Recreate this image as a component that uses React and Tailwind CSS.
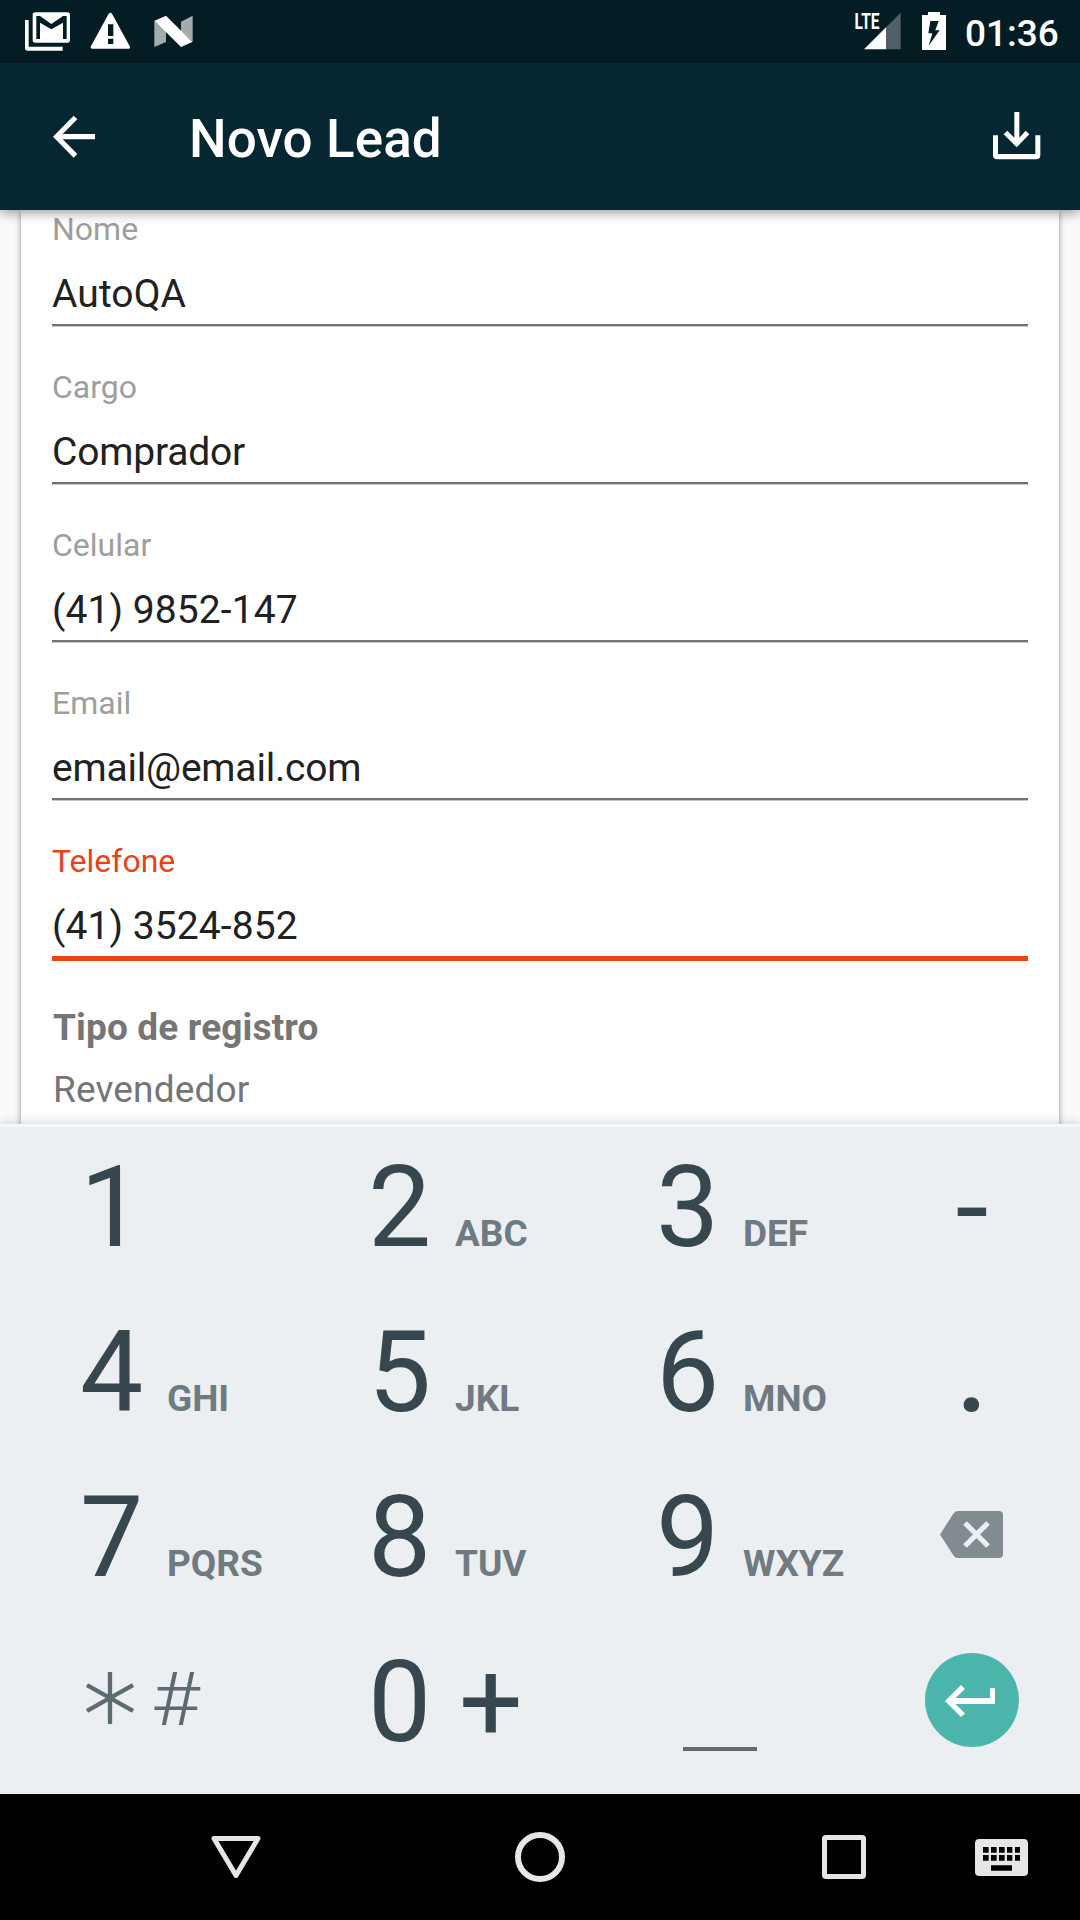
const FIELDS = [
  { label: 'Nome', value: 'AutoQA' },
  { label: 'Cargo', value: 'Comprador', tight: true },
  { label: 'Celular', value: '(41) 9852-147' },
  { label: 'Email', value: 'email@email.com', tight: true },
  { label: 'Telefone', value: '(41) 3524-852', active: true },
];

function StatusBar() {
  return (
    <div className="flex h-[63px] items-start bg-[#041d24] pl-[25px] pr-[21px] pt-3 text-white">
      <svg width="45" height="39" viewBox="75 36 135 117" fill="currentColor">
        <path
          fillRule="evenodd"
          d="M106 37H202Q210 37 210 45V120Q210 128 202 128H106Q98 128 98 120V45Q98 37 106 37ZM109 48V117H120V68L154 88L189 68V117H200V48H189L154 72L120 48Z"
        />
        <path d="M75 60H86V140H188V152H83Q75 152 75 144Z" />
      </svg>
      <svg className="ml-5" width="40" height="38" viewBox="270 36 120 114" fill="currentColor">
        <path
          fillRule="evenodd"
          d="M326 41Q331 35 336 41L390 140Q391 146 386 146H276Q271 146 272 140ZM324 73V108H340V73ZM324 116V132H340V116Z"
        />
      </svg>
      <svg className="ml-6 mt-[3px]" width="39" height="33" viewBox="462 45 117 99" fill="currentColor">
        <path opacity=".63" d="M463 61L498 92V126L463 141ZM543 65L578 47V126L543 95Z" />
        <path d="M464 62L498 47L577 126L543 141Z" />
      </svg>
      <svg className="ml-auto overflow-visible" width="46" height="38" viewBox="0 0 46 38" fill="currentColor">
        <path opacity=".3" d="M31 15.3L45.7 .7V37.3H31Z" />
        <path d="M9 37.3L31 15.3V37.3Z" />
        <text x="-0.500" y="17" fontSize="22.5" fontWeight="700" textLength="25" lengthAdjust="spacingAndGlyphs">
          LTE
        </text>
      </svg>
      <svg className="ml-[21px]" width="24" height="38" viewBox="366 36 72 114" fill="currentColor">
        <path
          fillRule="evenodd"
          d="M384 36H420V45H438V150H366V45H384ZM391 63L385 100H397L386 137L419 91H406L416 63Z"
        />
      </svg>
      <span className="ml-[19px] mt-[1px] w-[94px] whitespace-nowrap text-[37px] font-medium leading-[42px]">01:36</span>
    </div>
  );
}

function AppBar() {
  return (
    <div className="relative z-10 flex h-[147px] items-center bg-[#062731] pl-[53px] pr-[39px] text-white shadow-[0_2px_12px_rgba(0,0,0,0.45)]">
      <svg width="42" height="43" viewBox="159 345 126 129" fill="currentColor">
        <path d="M159 410L221 347L232 358L188 402H285V418H188L232 462L221 473Z" />
      </svg>
      <h1 className="ml-[94px] pt-1 text-[53px] font-medium leading-[62px] tracking-[0.1px]">Novo Lead</h1>
      <svg className="mb-px ml-auto" width="48" height="48" viewBox="579 336 144 144" fill="currentColor">
        <path d="M643 336H658V413L677 392L688 403L650 442L611 403L622 392L643 413Z" />
        <path d="M579 406H594V462H706V406H721V466Q721 478 709 478H591Q579 478 579 466Z" />
      </svg>
    </div>
  );
}

function Field({ label, value, active, tight }) {
  return (
    <div className="h-[158px]">
      <div className={`h-9 text-[32px] leading-9 ${active ? 'text-[#e84215]' : 'text-[#9e9e9e]'}`}>{label}</div>
      <div className={`mt-[23px] h-12 text-[39px] leading-[48px] text-[#212121] ${tight ? 'tracking-[-0.2px]' : 'tracking-[0.08px]'}`}>
        {value}
      </div>
      {active ? (
        <div className="mt-1.5 h-[5px] bg-[#e84215]" />
      ) : (
        <div className="mt-1.5 h-[3px] border-b border-[#c8c8c8] bg-[#737373]" />
      )}
    </div>
  );
}

function Key({ digit, letters }) {
  return (
    <div className="flex items-baseline leading-[165px]">
      <span className="w-[87px] text-[112.5px]">{digit}</span>
      <span className="text-[37px] font-bold text-[#6f7b80]">{letters}</span>
    </div>
  );
}

function Keypad() {
  return (
    <div className="relative z-10 h-[670px] border-t-[3px] border-[#f5f7f8] bg-[#eceff1] text-[#37474f] shadow-[0_0_12px_rgba(0,0,0,0.2)]">
      <div className="-mt-[2.5px] grid auto-rows-[165px] grid-cols-[288px_288px_248px_136px] pl-20">
        <Key digit="1" />
        <Key digit="2" letters="ABC" />
        <Key digit="3" letters="DEF" />
        <div className="scale-x-[1.06] text-center text-[112.5px] leading-[165px]">-</div>
        <Key digit="4" letters="GHI" />
        <Key digit="5" letters="JKL" />
        <Key digit="6" letters="MNO" />
        <div className="text-center text-[112.5px] font-medium leading-[165px]">.</div>
        <Key digit="7" letters="PQRS" />
        <Key digit="8" letters="TUV" />
        <Key digit="9" letters="WXYZ" />
        <div className="flex justify-center pr-0.5 pt-[56.5px]">
          <svg width="63" height="47" viewBox="0 0 63 47">
            <path fill="#818c90" d="M18 0H59Q63 0 63 4V43Q63 47 59 47H18Q15 47 13.500 44.500L0 23.500L13.500 2.500Q15 0 18 0Z" />
            <path stroke="#eceff1" strokeWidth="5.200" d="M25 12L48 35M48 12L25 35" />
          </svg>
        </div>
        <div className="flex text-[#5c6b71]">
          <svg className="ml-1.5 mt-[52.5px]" width="48" height="53" viewBox="0 0 48 53" stroke="currentColor" strokeWidth="4.300">
            <path d="M24 0V52M1 13L47 39M47 13L1 39" />
          </svg>
          <span className="-mt-[2.5px] ml-[17px] origin-left scale-x-[1.12] text-[75px] font-light leading-[165px]">#</span>
        </div>
        <div className="flex text-[112.5px] leading-[165px]">
          <span className="w-[91px]">0</span>
          <span>+</span>
        </div>
        <div className="pl-[27px] pt-[127.5px]">
          <div className="h-1 w-[74px] bg-[#5f6d72]" />
        </div>
        <div className="flex justify-center pt-[33.5px]">
          <div className="flex size-[94px] items-center justify-center rounded-full bg-[#4db6ac] pr-[3px]">
            <svg width="51" height="33" viewBox="0 0 51 33" fill="#fff">
              <path d="M0 17L16 1L20 5L10.500 14H45V4H50V20H10.500L20 29.500L16 33Z" />
            </svg>
          </div>
        </div>
      </div>
    </div>
  );
}

function NavBar() {
  return (
    <div className="flex h-[126px] items-center bg-black pl-[211px] text-[#e6e6e6]">
      <svg width="50" height="42" viewBox="0 0 50 42" fill="none" stroke="currentColor" strokeWidth="5" strokeLinejoin="round">
        <path d="M3 2.500H47L25 39.500Z" />
      </svg>
      <div className="ml-[254px] size-[50px] rounded-full border-[6px] border-current" />
      <div className="ml-[257px] size-11 rounded-[4px] border-[5px] border-current" />
      <svg className="ml-[109px]" width="53" height="37" viewBox="585 177 159 111" fill="currentColor">
        <path
          fillRule="evenodd"
          d="M598 177H731Q744 177 744 190V275Q744 288 731 288H598Q585 288 585 275V190Q585 177 598 177ZM609 201V218H626V201ZM633 201V218H650V201ZM657 201V218H674V201ZM681 201V218H697V201ZM705 201V218H720V201ZM609 225V242H626V225ZM633 225V242H650V225ZM657 225V242H674V225ZM681 225V242H697V225ZM705 225V242H720V225ZM633 256V272H696V256Z"
        />
      </svg>
    </div>
  );
}

export default function App() {
  return (
    <div className="flex h-[1920px] w-[1080px] flex-col overflow-hidden bg-[#fafafa] font-['Roboto',sans-serif]">
      <StatusBar />
      <AppBar />
      <div className="h-[914px] px-[21px]">
        <div className="h-full bg-white px-[31px] pt-px shadow-[0_2px_6px_rgba(0,0,0,0.42)]">
          {FIELDS.map((field) => (
            <Field key={field.label} {...field} />
          ))}
          <div className="pl-px pt-[5px] text-[37px] leading-[44px] tracking-[0.15px] text-[#757575]">
            <div className="font-bold">Tipo de registro</div>
            <div className="mt-[18px]">Revendedor</div>
          </div>
        </div>
      </div>
      <Keypad />
      <NavBar />
    </div>
  );
}
